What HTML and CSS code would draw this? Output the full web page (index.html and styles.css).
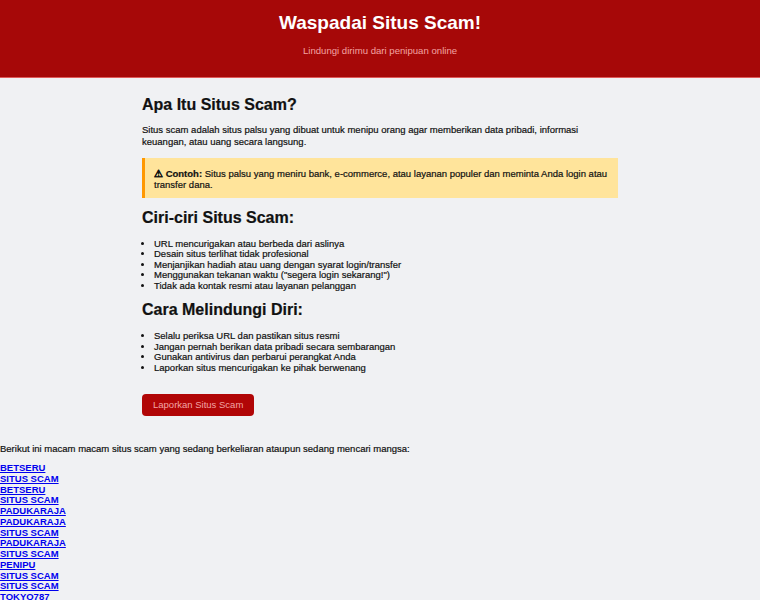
FILE: index.html
```html
<!DOCTYPE html>
<html lang="id">
<head>
<meta charset="utf-8">
<title>Waspadai Situs Scam!</title>
<link rel="stylesheet" href="styles.css">
</head>
<body>
<header class="site-header">
  <h1 class="site-title">Waspadai Situs Scam!</h1>
  <p class="site-sub">Lindungi dirimu dari penipuan online</p>
</header>
<main class="content">
  <h2 class="sec-title">Apa Itu Situs Scam?</h2>
  <p class="text">Situs scam adalah situs palsu yang dibuat untuk menipu orang agar memberikan data pribadi, informasi keuangan, atau uang secara langsung.</p>
  <div class="warning"><strong>⚠ Contoh:</strong> Situs palsu yang meniru bank, e-commerce, atau layanan populer dan meminta Anda login atau transfer dana.</div>
  <h2 class="sec-title">Ciri-ciri Situs Scam:</h2>
  <ul class="list">
    <li>URL mencurigakan atau berbeda dari aslinya</li>
    <li>Desain situs terlihat tidak profesional</li>
    <li>Menjanjikan hadiah atau uang dengan syarat login/transfer</li>
    <li>Menggunakan tekanan waktu ("segera login sekarang!")</li>
    <li>Tidak ada kontak resmi atau layanan pelanggan</li>
  </ul>
  <h2 class="sec-title">Cara Melindungi Diri:</h2>
  <ul class="list">
    <li>Selalu periksa URL dan pastikan situs resmi</li>
    <li>Jangan pernah berikan data pribadi secara sembarangan</li>
    <li>Gunakan antivirus dan perbarui perangkat Anda</li>
    <li>Laporkan situs mencurigakan ke pihak berwenang</li>
  </ul>
  <a class="report-btn" href="#">Laporkan Situs Scam</a>
</main>
<section class="scam-list">
  <p class="intro">Berikut ini macam macam situs scam yang sedang berkeliaran ataupun sedang mencari mangsa:</p>
  <div class="links">
    <a href="#">BETSERU</a>
    <a href="#">SITUS SCAM</a>
    <a href="#">BETSERU</a>
    <a href="#">SITUS SCAM</a>
    <a href="#">PADUKARAJA</a>
    <a href="#">PADUKARAJA</a>
    <a href="#">SITUS SCAM</a>
    <a href="#">PADUKARAJA</a>
    <a href="#">SITUS SCAM</a>
    <a href="#">PENIPU</a>
    <a href="#">SITUS SCAM</a>
    <a href="#">SITUS SCAM</a>
    <a href="#">TOKYO787</a>
    <a href="#">SITUS SCAM</a>
  </div>
</section>
</body>
</html>
```
FILE: styles.css
```css
html, body {
  margin: 0;
  padding: 0;
}
body {
  background: #f0f1f3;
  font-family: "Liberation Sans", Arial, sans-serif;
  font-size: 9.5px;
  color: #111;
}
.content, .intro {
  -webkit-text-stroke: 0.2px #111;
}
.site-header {
  background: #a60808;
  border-bottom: 1px solid #e05a5a;
  height: 78px;
  box-sizing: border-box;
  text-align: center;
  padding-top: 12px;
}
.site-title {
  margin: 0;
  color: #fff;
  font-size: 19px;
  font-weight: bold;
  line-height: 22px;
}
.site-sub {
  margin: 11px 0 0;
  color: #f3a3a3;
  font-size: 9.6px;
  line-height: 12px;
}
.content {
  width: 476px;
  margin: 0 auto;
  padding-top: 18px;
}
.sec-title {
  margin: 0;
  font-size: 16px;
  line-height: 18px;
  font-weight: bold;
  color: #111;
}
.text {
  margin: 10px 0 0;
  line-height: 11.8px;
}
.warning {
  margin-top: 10px;
  background: #ffe49b;
  border-left: 3px solid #ff9800;
  padding: 10px 8px 8px 9px;
  line-height: 11px;
}
.warning + .sec-title {
  margin-top: 11px;
}
.list {
  margin: 12px 0 0;
  padding-left: 12px;
  line-height: 10.5px;
}
.list + .sec-title {
  margin-top: 10px;
}
.report-btn {
  display: inline-block;
  margin-top: 21px;
  background: #b10606;
  color: #f2a5a5;
  -webkit-text-stroke: 0;
  text-decoration: none;
  padding: 0 11px;
  height: 22px;
  line-height: 22px;
  border-radius: 4px;
}
.scam-list {
  padding-top: 27px;
}
.intro {
  margin: 0 0 9px;
  line-height: 11px;
}
.links {
  display: flex;
  flex-direction: column;
  align-items: flex-start;
  line-height: 10.75px;
}
.links a {
  color: #0000ee;
  font-weight: bold;
}
```
